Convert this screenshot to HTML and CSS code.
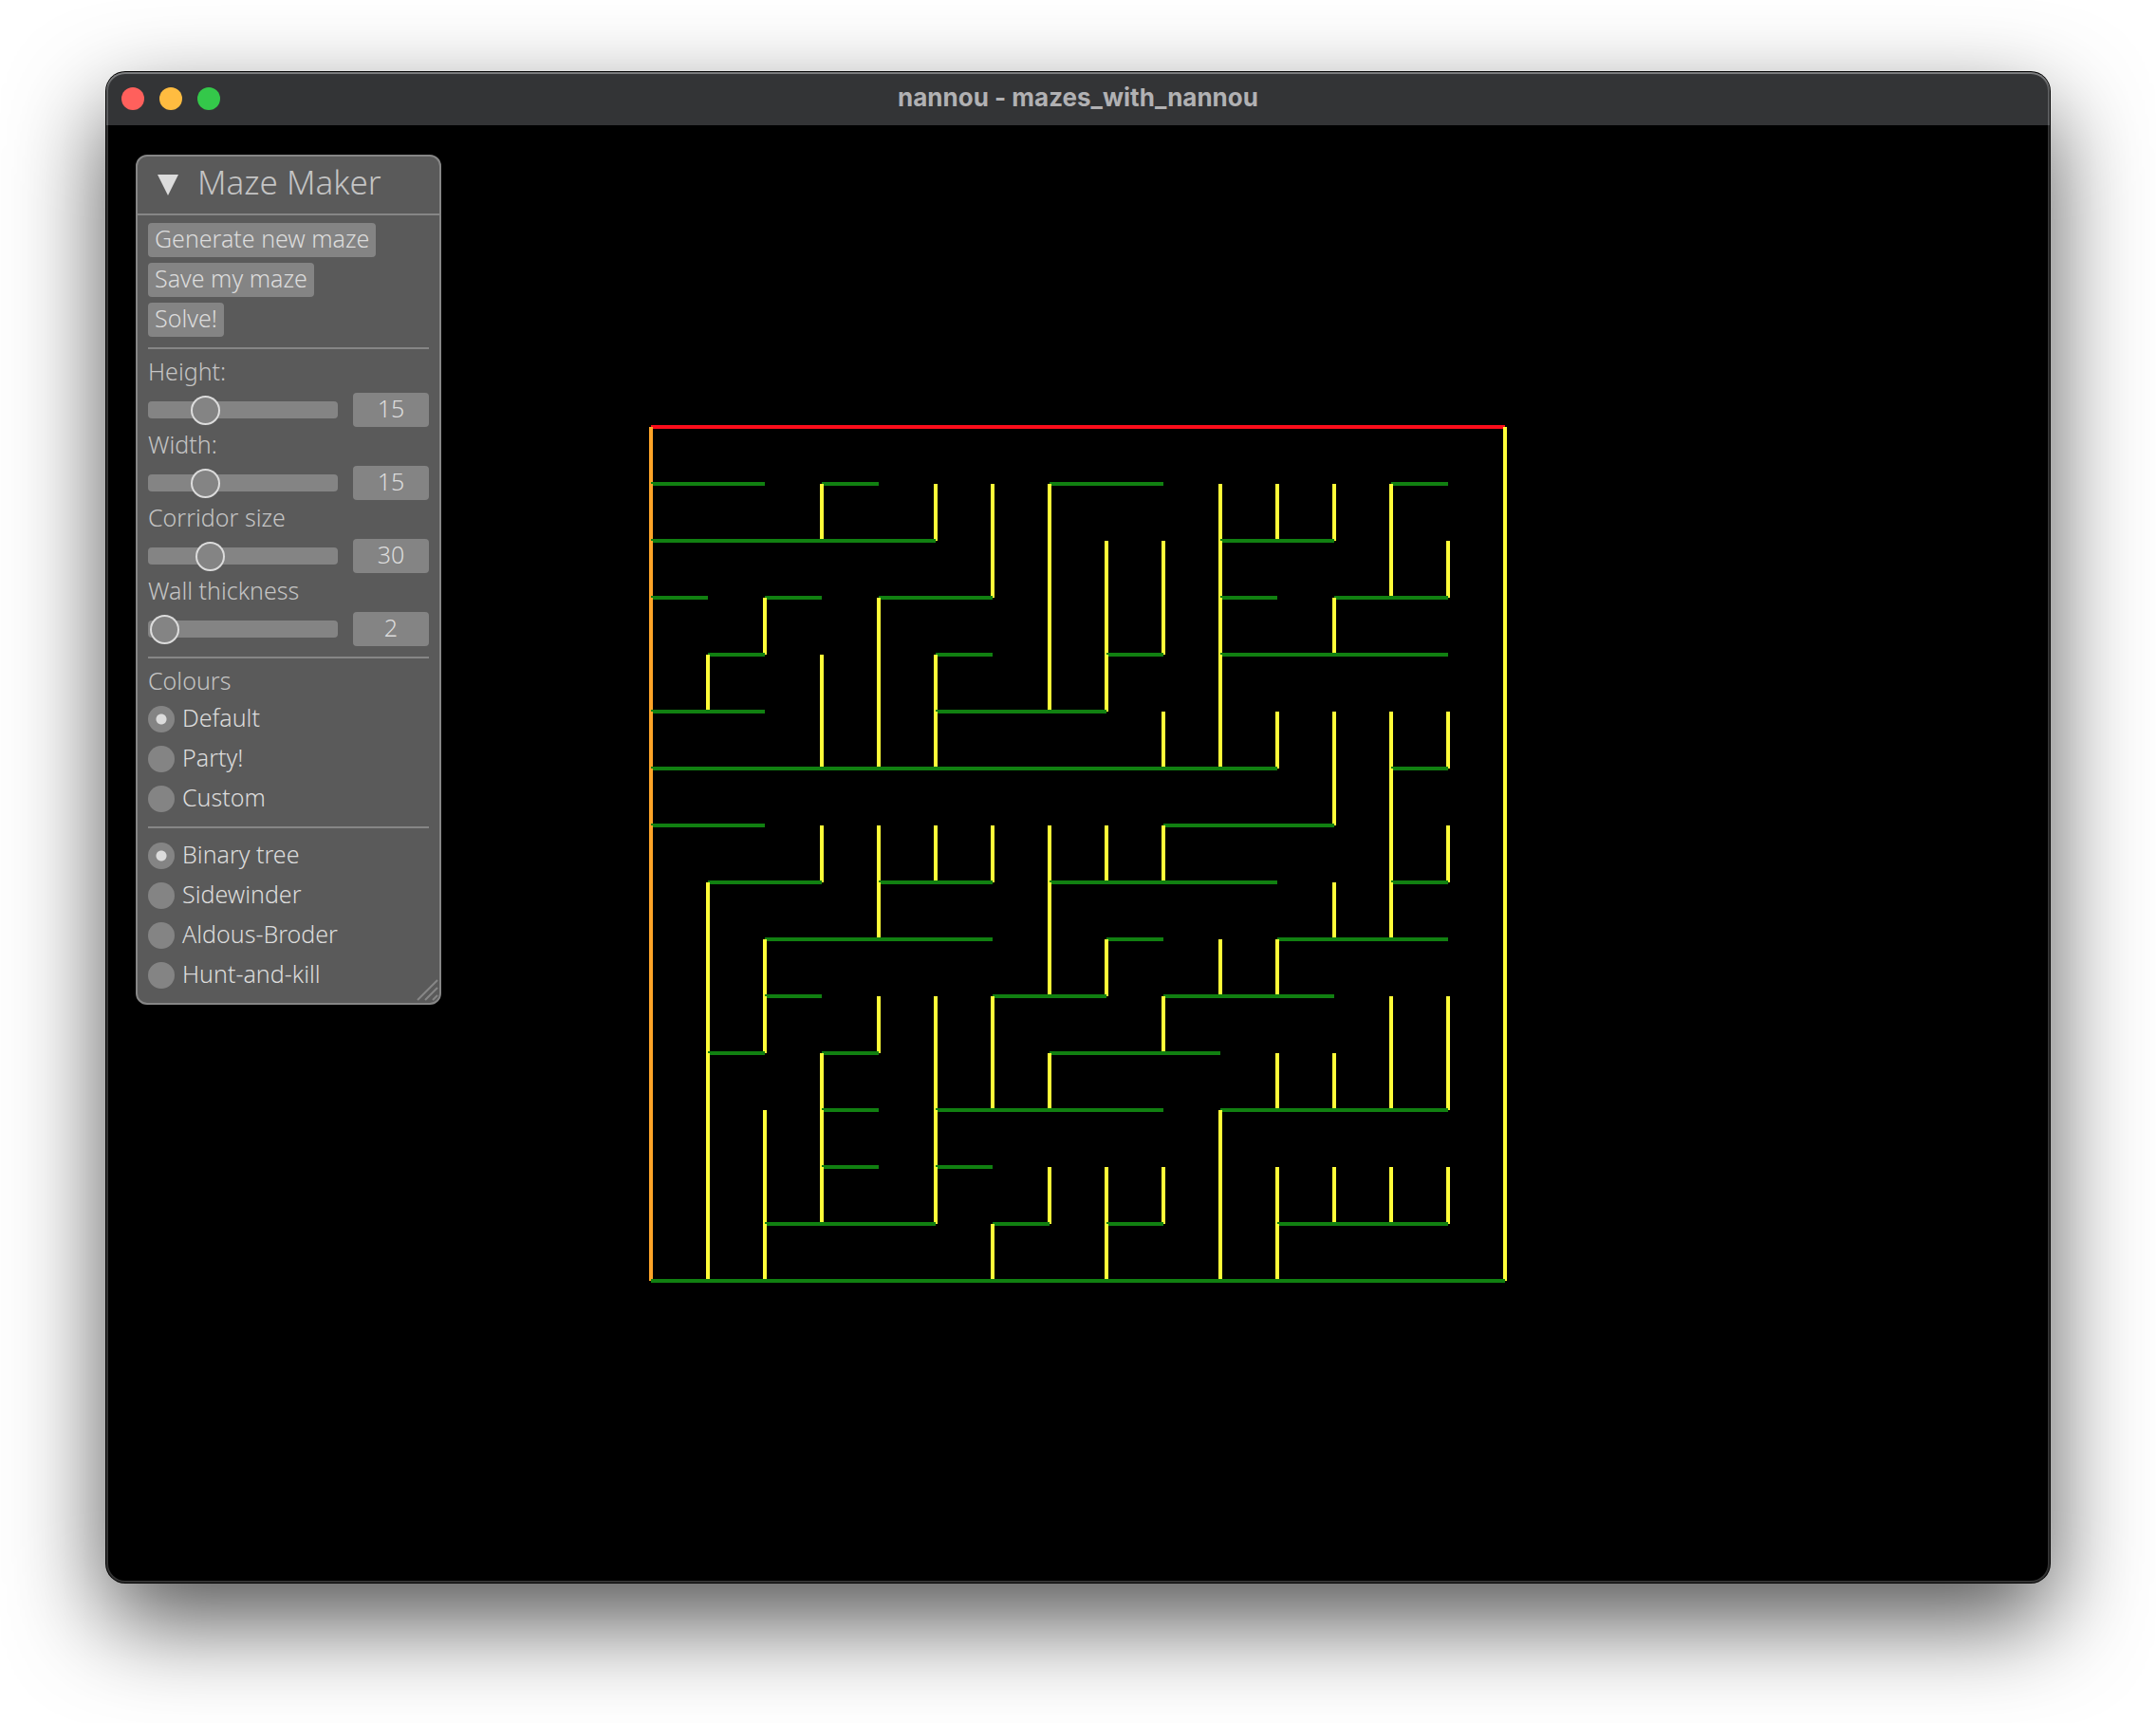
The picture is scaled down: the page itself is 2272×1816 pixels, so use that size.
FILE: index.html
```html
<!DOCTYPE html>
<html lang="en">
<head>
<meta charset="utf-8">
<title>nannou - mazes_with_nannou</title>
<link rel="stylesheet" href="styles.css">
</head>
<body>
<div class="window">
  <header class="titlebar">
    <div class="lights">
      <button class="light close" type="button" aria-label="Close"></button>
      <button class="light minimise" type="button" aria-label="Minimise"></button>
      <button class="light zoom" type="button" aria-label="Zoom"></button>
    </div>
    <h1 class="window-title">nannou - mazes_with_nannou</h1>
  </header>
  <main class="canvas">
    <section class="panel">
      <h2 class="panel-header">
        <button class="collapse" type="button" aria-expanded="true">
          <svg class="arrow" viewBox="0 0 22 22" aria-hidden="true"><path d="M0 0H22L11 22Z"/></svg>
          <span class="panel-title">Maze Maker</span>
        </button>
      </h2>
      <form class="panel-body">
        <button class="action" type="button">Generate new maze</button>
        <button class="action" type="button">Save my maze</button>
        <button class="action" type="button">Solve!</button>
        <hr class="separator">
        <label class="caption" for="height">Height:</label>
        <div class="slider-row">
          <input class="slider" id="height" type="range" min="0" max="55" value="15">
          <input class="value" type="text" inputmode="numeric" aria-label="Height value" value="15">
        </div>
        <label class="caption" for="width">Width:</label>
        <div class="slider-row">
          <input class="slider" id="width" type="range" min="0" max="55" value="15">
          <input class="value" type="text" inputmode="numeric" aria-label="Width value" value="15">
        </div>
        <label class="caption" for="corridor">Corridor size</label>
        <div class="slider-row">
          <input class="slider" id="corridor" type="range" min="0" max="100" value="30">
          <input class="value" type="text" inputmode="numeric" aria-label="Corridor size value" value="30">
        </div>
        <label class="caption" for="thickness">Wall thickness</label>
        <div class="slider-row">
          <input class="slider" id="thickness" type="range" min="1" max="45" value="2">
          <input class="value" type="text" inputmode="numeric" aria-label="Wall thickness value" value="2">
        </div>
        <hr class="separator">
        <span class="caption">Colours</span>
        <label class="option"><input class="radio" type="radio" name="colours" checked><span class="option-text">Default</span></label>
        <label class="option"><input class="radio" type="radio" name="colours"><span class="option-text">Party!</span></label>
        <label class="option"><input class="radio" type="radio" name="colours"><span class="option-text">Custom</span></label>
        <hr class="separator">
        <label class="option"><input class="radio" type="radio" name="algorithm" checked><span class="option-text">Binary tree</span></label>
        <label class="option"><input class="radio" type="radio" name="algorithm"><span class="option-text">Sidewinder</span></label>
        <label class="option"><input class="radio" type="radio" name="algorithm"><span class="option-text">Aldous-Broder</span></label>
        <label class="option"><input class="radio" type="radio" name="algorithm"><span class="option-text">Hunt-and-kill</span></label>
      </form>
      <svg class="grip" viewBox="0 0 24 24" aria-hidden="true"><path d="M2 22L23 1M10 22L23 9M18 22L23 17"/></svg>
    </section>
    <!-- Corridors are 30 units wide; each row draws its side walls, then its floor. -->
    <svg class="maze" viewBox="0 0 450 450" role="img" aria-label="Maze">
      <path class="north" d="M0 0H450"/>
      <g>
        <path class="west" d="M0 0v30"/>
        <path class="east" d="M450 0v30"/>
        <path class="south" d="M0 30H60M90 30H120M210 30H270M390 30H420"/>
      </g>
      <g>
        <path class="west" d="M0 30v30"/>
        <path class="east" d="M90 30v30M150 30v30M180 30v30M210 30v30M300 30v30M330 30v30M360 30v30M390 30v30M450 30v30"/>
        <path class="south" d="M0 60H150M300 60H360"/>
      </g>
      <g>
        <path class="west" d="M0 60v30"/>
        <path class="east" d="M180 60v30M210 60v30M240 60v30M270 60v30M300 60v30M390 60v30M420 60v30M450 60v30"/>
        <path class="south" d="M0 90H30M60 90H90M120 90H180M300 90H330M360 90H420"/>
      </g>
      <g>
        <path class="west" d="M0 90v30"/>
        <path class="east" d="M60 90v30M120 90v30M210 90v30M240 90v30M270 90v30M300 90v30M360 90v30M450 90v30"/>
        <path class="south" d="M30 120H60M150 120H180M240 120H270M300 120H420"/>
      </g>
      <g>
        <path class="west" d="M0 120v30"/>
        <path class="east" d="M30 120v30M90 120v30M120 120v30M150 120v30M210 120v30M240 120v30M300 120v30M450 120v30"/>
        <path class="south" d="M0 150H60M150 150H240"/>
      </g>
      <g>
        <path class="west" d="M0 150v30"/>
        <path class="east" d="M90 150v30M120 150v30M150 150v30M270 150v30M300 150v30M330 150v30M360 150v30M390 150v30M420 150v30M450 150v30"/>
        <path class="south" d="M0 180H330M390 180H420"/>
      </g>
      <g>
        <path class="west" d="M0 180v30"/>
        <path class="east" d="M360 180v30M390 180v30M450 180v30"/>
        <path class="south" d="M0 210H60M270 210H360"/>
      </g>
      <g>
        <path class="west" d="M0 210v30"/>
        <path class="east" d="M90 210v30M120 210v30M150 210v30M180 210v30M210 210v30M240 210v30M270 210v30M390 210v30M420 210v30M450 210v30"/>
        <path class="south" d="M30 240H90M120 240H180M210 240H330M390 240H420"/>
      </g>
      <g>
        <path class="west" d="M0 240v30"/>
        <path class="east" d="M30 240v30M120 240v30M210 240v30M360 240v30M390 240v30M450 240v30"/>
        <path class="south" d="M60 270H180M240 270H270M330 270H420"/>
      </g>
      <g>
        <path class="west" d="M0 270v30"/>
        <path class="east" d="M30 270v30M60 270v30M210 270v30M240 270v30M300 270v30M330 270v30M450 270v30"/>
        <path class="south" d="M60 300H90M180 300H240M270 300H360"/>
      </g>
      <g>
        <path class="west" d="M0 300v30"/>
        <path class="east" d="M30 300v30M60 300v30M120 300v30M150 300v30M180 300v30M270 300v30M390 300v30M420 300v30M450 300v30"/>
        <path class="south" d="M30 330H60M90 330H120M210 330H300"/>
      </g>
      <g>
        <path class="west" d="M0 330v30"/>
        <path class="east" d="M30 330v30M90 330v30M150 330v30M180 330v30M210 330v30M330 330v30M360 330v30M390 330v30M420 330v30M450 330v30"/>
        <path class="south" d="M90 360H120M150 360H270M300 360H420"/>
      </g>
      <g>
        <path class="west" d="M0 360v30"/>
        <path class="east" d="M30 360v30M60 360v30M90 360v30M150 360v30M300 360v30M450 360v30"/>
        <path class="south" d="M90 390H120M150 390H180"/>
      </g>
      <g>
        <path class="west" d="M0 390v30"/>
        <path class="east" d="M30 390v30M60 390v30M90 390v30M150 390v30M210 390v30M240 390v30M270 390v30M300 390v30M330 390v30M360 390v30M390 390v30M420 390v30M450 390v30"/>
        <path class="south" d="M60 420H150M180 420H210M240 420H270M330 420H420"/>
      </g>
      <g>
        <path class="west" d="M0 420v30"/>
        <path class="east" d="M30 420v30M60 420v30M180 420v30M240 420v30M300 420v30M330 420v30M450 420v30"/>
        <path class="south" d="M0 450H450"/>
      </g>
    </svg>
  </main>
</div>
</body>
</html>
```
FILE: styles.css
```css
* {
  box-sizing: border-box;
}

body {
  margin: 0;
  min-height: 100vh;
  padding: 76px 112px 148px;
  display: flex;
  flex-direction: column;
  background: #fff;
  font-family: "Noto Sans", sans-serif;
  font-size: 25px;
  font-weight: 300;
  overflow-x: hidden;
}

button,
input {
  margin: 0;
  padding: 0;
  border: 0;
  color: inherit;
  font: inherit;
}

/* Window frame */

.window {
  position: relative;
  flex: 1;
  display: flex;
  flex-direction: column;
  border-radius: 20px;
  background: #000;
  box-shadow: 0 0 0 1px #000, 0 40px 100px rgba(0, 0, 0, 0.68);
}

/* Highlight that runs round the inside edge, brighter along the top */
.window::after {
  content: "";
  position: absolute;
  inset: 0;
  border-radius: 20px;
  box-shadow: inset 0 2px rgba(255, 255, 255, 0.2), inset 0 0 0 2px rgba(255, 255, 255, 0.2);
  pointer-events: none;
}

.titlebar {
  height: 56px;
  padding: 0 16px;
  display: grid;
  grid-template-columns: 1fr auto 1fr;
  align-items: center;
  border-radius: 20px 20px 0 0;
  background: #333436;
}

.lights {
  display: flex;
  gap: 16px;
}

.light {
  width: 24px;
  height: 24px;
  border-radius: 50%;
}

.close {
  background: #ff605c;
}

.minimise {
  background: #ffbc40;
}

.zoom {
  background: #34c84a;
}

.window-title {
  margin: 0;
  padding-bottom: 2px;
  color: #b1b1b3;
  font: 700 26px/32px Inter, sans-serif;
}

.canvas {
  flex: 1;
  padding: 31px;
  display: grid;
  grid-template-columns: 1fr auto 1fr;
  align-items: center;
}

/* Control panel */

.panel {
  position: relative;
  align-self: start;
  justify-self: start;
  width: 322px;
  border: 2px solid #868686;
  border-radius: 12px;
  background: #5a5a5a;
  color: #dcdcdc;
}

.panel-header {
  margin: 0;
  border-bottom: 2px solid #868686;
  font-size: 35px;
  font-weight: 300;
}

.collapse {
  width: 100%;
  height: 60px;
  padding: 0 21px;
  display: flex;
  align-items: center;
  gap: 20px;
  background: none;
  color: #c4c4c4;
}

.panel-title {
  height: 60px;
  line-height: 54px;
}

.arrow {
  width: 22px;
  height: 22px;
  fill: #dcdcdc;
}

.panel-body {
  padding: 8px 11px 11px;
  display: flex;
  flex-direction: column;
  align-items: flex-start;
  gap: 6px;
}

.action {
  height: 36px;
  padding: 0 7px 4px;
  border-radius: 4px;
  background: #848484;
  line-height: 32px;
}

.separator {
  width: 100%;
  height: 2px;
  margin: 5px 0;
  border: 0;
  background: #868686;
}

.caption {
  height: 29px;
  color: #c4c4c4;
  line-height: 25px;
}

.slider-row {
  width: 100%;
  display: flex;
  align-items: center;
  gap: 16px;
}

.slider {
  flex: 1;
  min-width: 0;
  height: 36px;
  appearance: none;
  background: none;
}

.slider::-webkit-slider-runnable-track {
  height: 18px;
  border-radius: 4px;
  background: #848484;
}

.slider::-webkit-slider-thumb {
  width: 27px;
  height: 27px;
  margin-top: -4px;
  appearance: none;
  border-radius: 50%;
  background: #848484;
  box-shadow: 0 0 0 2px #dcdcdc;
}

.value {
  width: 80px;
  height: 36px;
  padding-bottom: 4px;
  border-radius: 4px;
  background: #848484;
  text-align: center;
}

.option {
  height: 36px;
  display: flex;
  align-items: center;
  gap: 8px;
}

.option-text {
  height: 36px;
  line-height: 32px;
}

.radio {
  width: 28px;
  height: 28px;
  appearance: none;
  border-radius: 50%;
  background: #848484;
}

.radio:checked {
  background: radial-gradient(circle, #dcdcdc 5px, #848484 6px);
}

.grip {
  position: absolute;
  right: 1px;
  bottom: 1px;
  width: 24px;
  height: 24px;
  fill: none;
  stroke: #868686;
  stroke-width: 2;
}

/* Maze */

.maze {
  width: 900px;
  overflow: visible;
  fill: none;
  stroke-width: 2;
}

.north {
  stroke: #fc0d1b;
}

.west {
  stroke: #fda428;
}

.east {
  stroke: #fffd38;
}

.south {
  stroke: #118011;
}
```
